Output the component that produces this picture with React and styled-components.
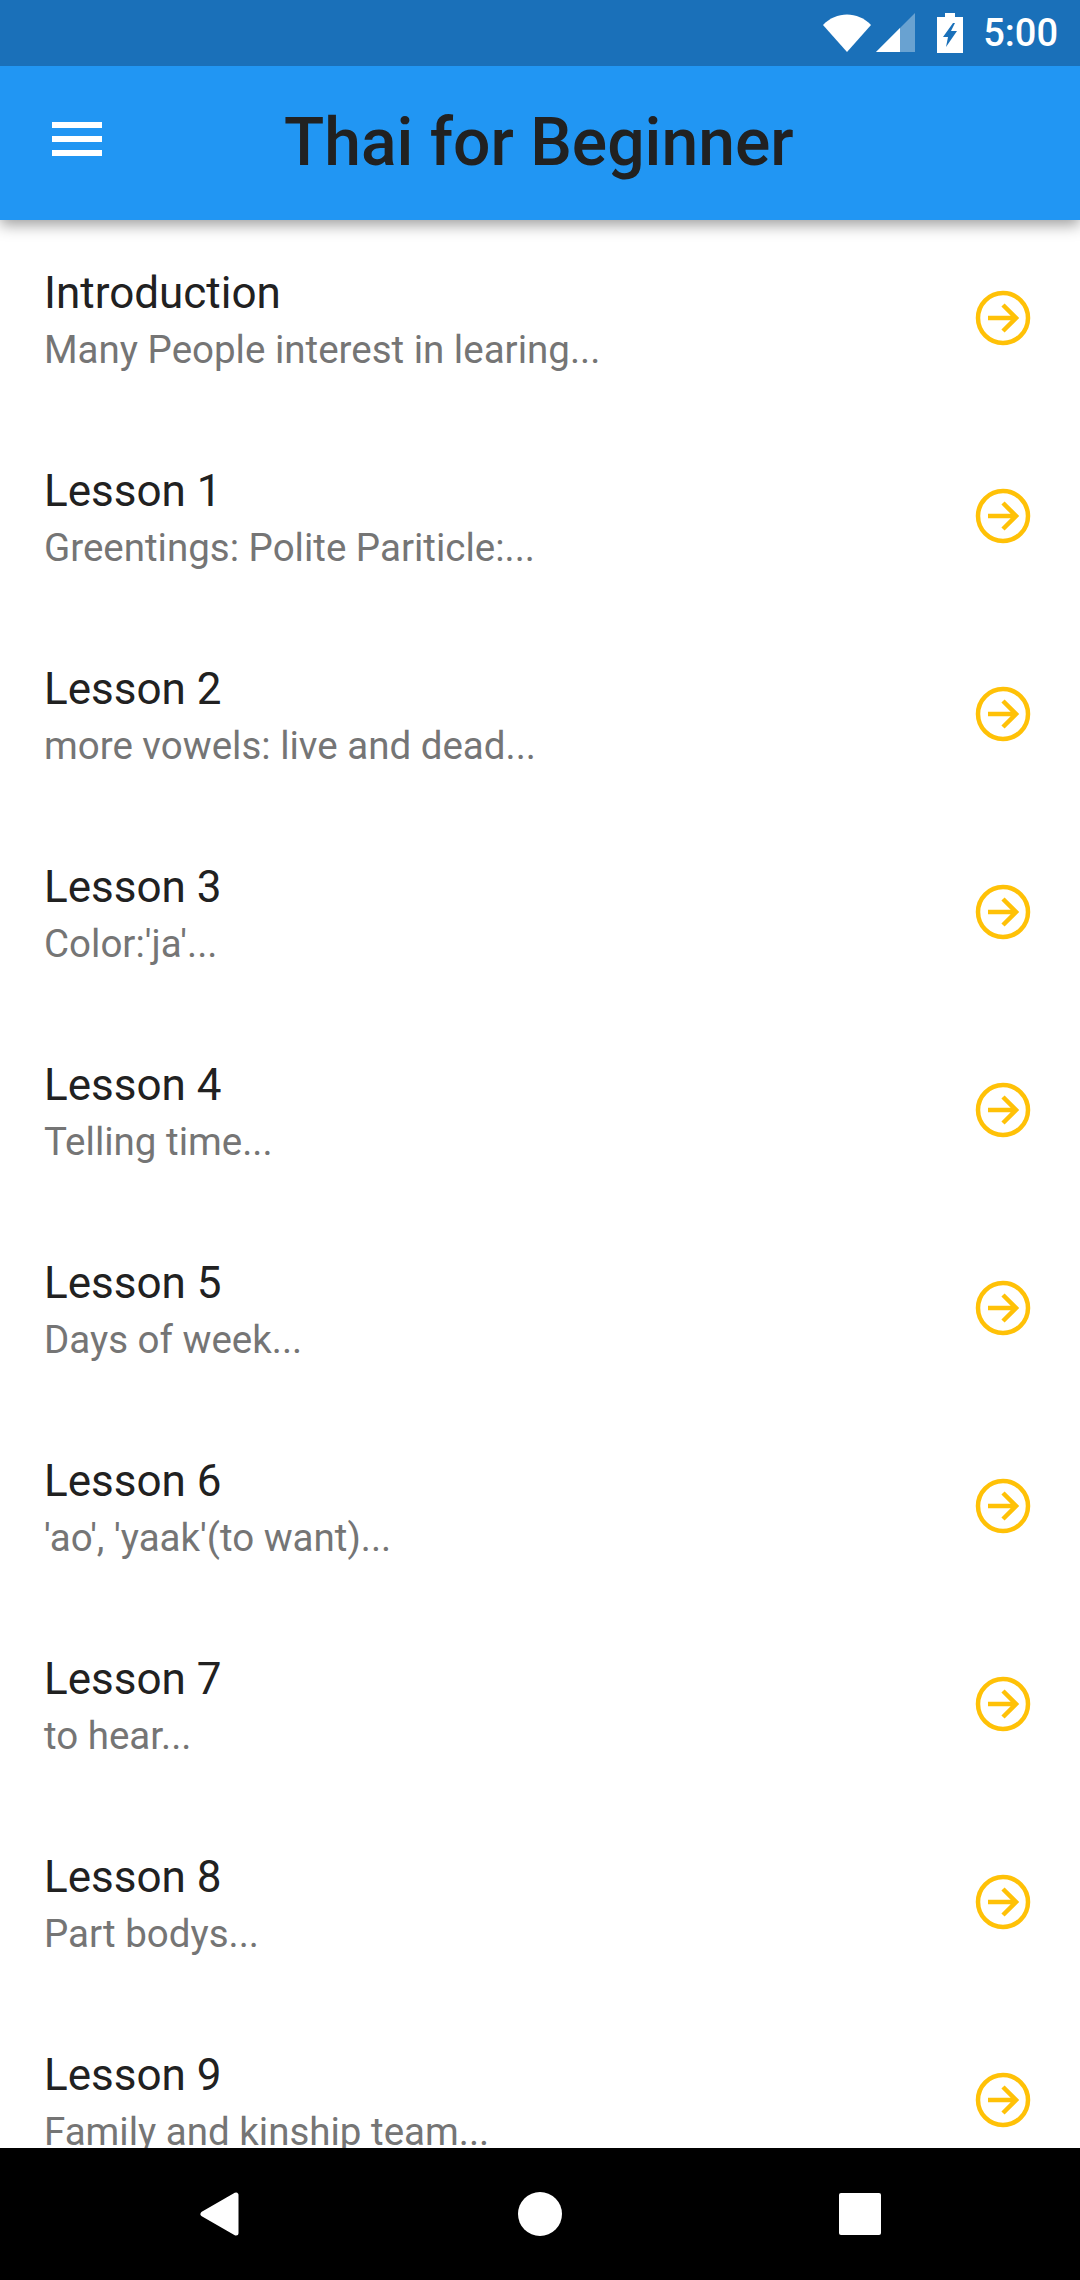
import React from 'react';
import styled, { createGlobalStyle } from 'styled-components';

const lessons = [
  ['Introduction', 'Many People interest in learing...'],
  ['Lesson 1', 'Greentings: Polite Pariticle:...'],
  ['Lesson 2', 'more vowels: live and dead...'],
  ['Lesson 3', "Color:'ja'..."],
  ['Lesson 4', 'Telling time...'],
  ['Lesson 5', 'Days of week...'],
  ['Lesson 6', "'ao', 'yaak'(to want)..."],
  ['Lesson 7', 'to hear...'],
  ['Lesson 8', 'Part bodys...'],
  ['Lesson 9', 'Family and kinship team...'],
];

const GlobalStyle = createGlobalStyle`
  html, body {
    margin: 0;
    padding: 0;
    background: #fff;
  }
  body {
    font-family: Roboto, "Liberation Sans", sans-serif;
  }
`;

const Screen = styled.div`
  width: 1080px;
  height: 2280px;
  display: flex;
  flex-direction: column;
  overflow: hidden;
`;

const StatusBar = styled.div`
  height: 66px;
  flex: none;
  background: #1a70b9;
  display: flex;
  align-items: center;
  justify-content: flex-end;
  padding-right: 22px;
  color: #fff;
  position: relative;
  z-index: 2;
`;

const Clock = styled.span`
  font-size: 38px;
  font-weight: 500;
  margin-left: 20px;
  line-height: 66px;
`;

const AppBar = styled.header`
  height: 154px;
  flex: none;
  background: #2196f3;
  display: flex;
  align-items: center;
  box-shadow: 0 5px 14px rgba(0, 0, 0, 0.38);
  position: relative;
  z-index: 1;
`;

const MenuButton = styled.div`
  width: 50px;
  height: 34px;
  margin-left: 52px;
  margin-top: -8px;
  display: flex;
  flex-direction: column;
  justify-content: space-between;
  flex: none;
`;

const MenuLine = styled.span`
  display: block;
  height: 6px;
  background: #fff;
`;

const Title = styled.h1`
  margin: -2px 0 0 182px;
  font-size: 66px;
  font-weight: 500;
  color: #212121;
  white-space: nowrap;
`;

const List = styled.main`
  flex: 1;
  min-height: 0;
  overflow: hidden;
`;

const Row = styled.div`
  height: 198px;
  box-sizing: border-box;
  display: flex;
  align-items: center;
  justify-content: space-between;
  padding: 0 49px 2px 44px;
`;

const RowText = styled.div`
  display: flex;
  flex-direction: column;
  padding-top: 6px;
`;

const RowTitle = styled.div`
  font-size: 44px;
  line-height: 58px;
  color: #212121;
`;

const RowSubtitle = styled.div`
  font-size: 38.5px;
  line-height: 56px;
  color: #757575;
`;

const NavBar = styled.nav`
  height: 132px;
  flex: none;
  background: #000;
  display: flex;
  align-items: center;
  justify-content: center;
`;

const NavSlot = styled.div`
  width: 320px;
  display: flex;
  justify-content: center;
`;

const Wifi = () => (
  <svg width="48" height="38" viewBox="0 0 48 38">
    <path d="M0 11 C13 -3 35 -3 48 11 L24 38 Z" fill="#fff" />
  </svg>
);

const Signal = () => (
  <svg width="39" height="40" viewBox="0 0 39 40" style={{ marginLeft: 5 }}>
    <path d="M39 0 V39 H0 Z" fill="#fff" fillOpacity="0.35" />
    <path d="M24 15 V39 H0 Z" fill="#fff" />
  </svg>
);

const Battery = () => (
  <svg width="26" height="40" viewBox="0 0 26 40" style={{ marginLeft: 22 }}>
    <path
      fillRule="evenodd"
      d="M8 0 H18 V4 H26 V40 H0 V4 H8 Z M16 10 L6 24 H11 L9 34 L20 18 H14 L18 10 Z"
      fill="#fff"
    />
  </svg>
);

const ArrowIcon = () => (
  <svg width="56" height="56" viewBox="0 0 56 56" fill="none" stroke="#ffc107" strokeWidth="4.5">
    <circle cx="28" cy="28" r="25" />
    <path d="M13 28 H41 M28 15 L41 28 L28 41" />
  </svg>
);

const BackIcon = () => (
  <svg width="42" height="46" viewBox="0 0 42 46">
    <path d="M37 4 V42 L4 23 Z" fill="#fff" stroke="#fff" strokeWidth="5" strokeLinejoin="round" />
  </svg>
);

const HomeDot = styled.div`
  width: 44px;
  height: 44px;
  border-radius: 50%;
  background: #fff;
`;

const RecentSquare = styled.div`
  width: 42px;
  height: 42px;
  border-radius: 2px;
  background: #fff;
`;

export default function App() {
  return (
    <Screen>
      <GlobalStyle />
      <StatusBar>
        <Wifi />
        <Signal />
        <Battery />
        <Clock>5:00</Clock>
      </StatusBar>
      <AppBar>
        <MenuButton>
          <MenuLine />
          <MenuLine />
          <MenuLine />
        </MenuButton>
        <Title>Thai for Beginner</Title>
      </AppBar>
      <List>
        {lessons.map(([title, subtitle]) => (
          <Row key={title}>
            <RowText>
              <RowTitle>{title}</RowTitle>
              <RowSubtitle>{subtitle}</RowSubtitle>
            </RowText>
            <ArrowIcon />
          </Row>
        ))}
      </List>
      <NavBar>
        <NavSlot><BackIcon /></NavSlot>
        <NavSlot><HomeDot /></NavSlot>
        <NavSlot><RecentSquare /></NavSlot>
      </NavBar>
    </Screen>
  );
}
